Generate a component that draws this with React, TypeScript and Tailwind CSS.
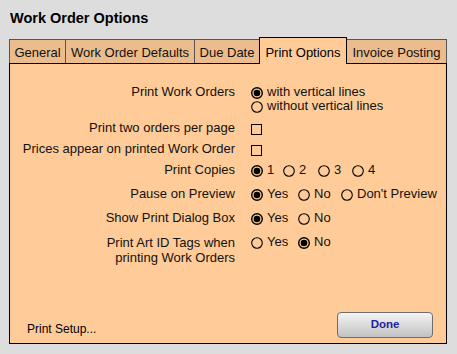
import React from "react";

const tabs = [
  { label: "General", w: "w-[56px]", border: "border-l" },
  { label: "Work Order Defaults", w: "w-[129px]", border: "border-l" },
  { label: "Due Date", w: "w-[65px]", border: "border-l" },
  { label: "Print Options", w: "w-[88px]", border: "", active: true },
  { label: "Invoice Posting", w: "w-[100px]", border: "border-r" },
];

function Radio({ on }: { on?: boolean }) {
  return (
    <svg width="12" height="12" viewBox="0 0 12 12" className="shrink-0 translate-y-[1px]">
      <circle cx="6" cy="6" r="5.3" fill="none" stroke="#000" strokeWidth={on ? 1.4 : 1.1} />
      {on && <circle cx="6" cy="6" r="3.3" fill="#000" />}
    </svg>
  );
}

function Check() {
  return <div className="w-[11px] h-[11px] border border-black shrink-0 translate-y-[1px]" />;
}

function Option({ label, on, w = "" }: { label: string; on?: boolean; w?: string }) {
  return (
    <div className={`flex items-center gap-[4px] h-[14px] ${w}`}>
      <Radio on={on} />
      <span>{label}</span>
    </div>
  );
}

function Row({ label, mt, children, lead = "leading-[14px]" }: { label: React.ReactNode; mt: string; children: React.ReactNode; lead?: string }) {
  return (
    <div className={`flex items-start ${mt}`}>
      <div className={`w-[225px] text-right ${lead}`}>{label}</div>
      <div className="ml-[16px]">{children}</div>
    </div>
  );
}

export default function App() {
  return (
    <div className="w-[457px] h-[354px] bg-[#dddddd] font-['Liberation_Sans',Arial,sans-serif] text-[#111] overflow-hidden">
      <div className="pt-[9px] pl-[10px] h-[27px] text-[14.5px] leading-[18px] font-bold text-black">
        Work Order Options
      </div>

      <div className="mt-[10px] ml-[9px] w-[438px]">
        {/* tab strip */}
        <div className="flex items-end h-[26px] text-[13px] leading-[14px]">
          {tabs.map((t) =>
            t.active ? (
              <div
                key={t.label}
                className={`${t.w} h-[27px] -mb-px relative z-10 bg-[#ffcc99] border-t border-l border-r border-black text-center pt-[8px] text-black`}
              >
                {t.label}
              </div>
            ) : (
              <div
                key={t.label}
                className={`${t.w} h-[24px] bg-[#ecbc8c] border-t ${t.border} border-[#555] text-center pt-[6px]`}
              >
                {t.label}
              </div>
            )
          )}
        </div>

        {/* panel */}
        <div className="h-[281px] bg-[#ffcc99] border border-black flex flex-col text-[13px] leading-[14px]">
          <div className="pt-[21px]">
            <Row label="Print Work Orders" mt="">
              <div className="flex flex-col">
                <Option label="with vertical lines" on />
                <Option label="without vertical lines" />
              </div>
            </Row>
            <Row label="Print two orders per page" mt="mt-[8px]">
              <div className="h-[14px] flex items-center">
                <Check />
              </div>
            </Row>
            <Row label="Prices appear on printed Work Order" mt="mt-[7px]">
              <div className="h-[14px] flex items-center">
                <Check />
              </div>
            </Row>
            <Row label="Print Copies" mt="mt-[7px]">
              <div className="flex">
                <Option label="1" on w="w-[32px]" />
                <Option label="2" w="w-[35px]" />
                <Option label="3" w="w-[34px]" />
                <Option label="4" />
              </div>
            </Row>
            <Row label="Pause on Preview" mt="mt-[10px]">
              <div className="flex">
                <Option label="Yes" on w="w-[47px]" />
                <Option label="No" w="w-[43px]" />
                <Option label="Don't Preview" />
              </div>
            </Row>
            <Row label="Show Print Dialog Box" mt="mt-[10px]">
              <div className="flex">
                <Option label="Yes" on w="w-[47px]" />
                <Option label="No" />
              </div>
            </Row>
            <Row
              label={
                <>
                  Print Art ID Tags when
                  <br />
                  printing Work Orders
                </>
              }
              mt="mt-[10px]"
              lead="leading-[15px]"
            >
              <div className="flex">
                <Option label="Yes" w="w-[47px]" />
                <Option label="No" on />
              </div>
            </Row>
          </div>

          <div className="mt-auto flex items-end justify-between pl-[17px] pr-[13px] pb-[5px]">
            <span className="text-[12px] leading-[14px] mb-[2px] text-black">Print Setup...</span>
            <button className="w-[96px] h-[26px] rounded-[4px] border border-[#6e6e6e] bg-gradient-to-b from-[#f4f4f4] to-[#c2c2c2] text-[11.5px] font-bold text-[#1e1ea8] leading-none">
              Done
            </button>
          </div>
        </div>
      </div>
    </div>
  );
}
